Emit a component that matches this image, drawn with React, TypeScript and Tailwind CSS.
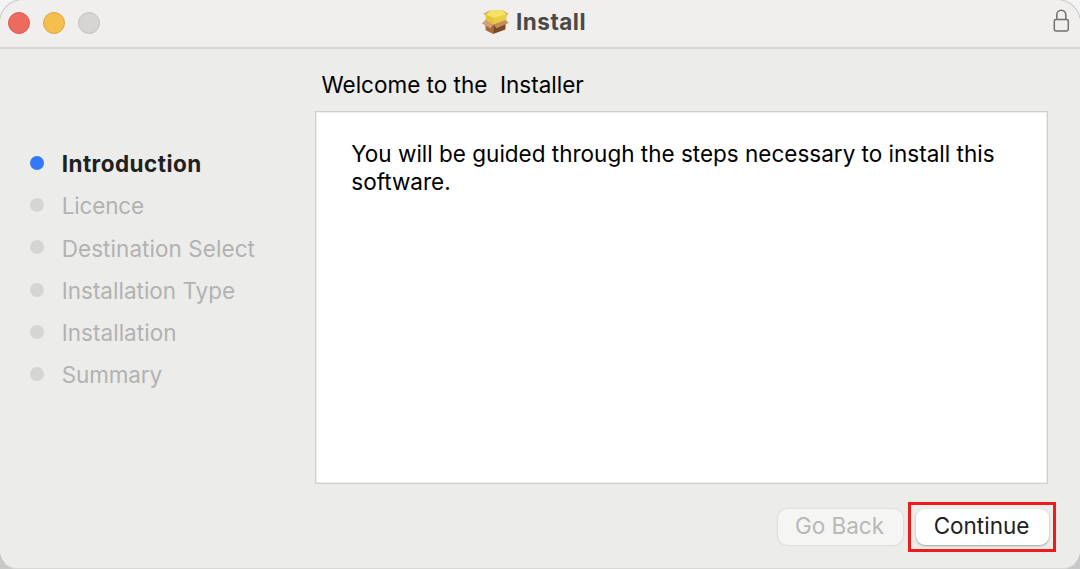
const steps = ['Introduction', 'Licence', 'Destination Select', 'Installation Type', 'Installation', 'Summary'];
const tracking = ['tracking-[0.45px]', 'tracking-[-0.15px]', 'tracking-[0.06px]', '', 'tracking-[0.03px]', 'tracking-[-0.15px]'];

function PackageIcon() {
  return (
    <svg viewBox="0 0 28 26" className="h-[26px] w-7 shrink-0">
      <path d="M4.2 12 12.2 16v9L4.6 21.2Z" fill="#a66d3c" />
      <path d="M12.2 15.5 24.8 12 24.4 20.4 12.2 25Z" fill="#7d4a22" />
      <path d="m2 4.6 6.5-3 1 2.2-5 3Z" fill="#dfb184" />
      <path d="m22 1.4 5.4 3.4-2.6 2.4-4-3Z" fill="#d5a16d" />
      <path d="m4.8 6 3.8-4.4L22 1.2l3.8 4.6-.6 5.6-13 4L4.6 11.6Z" fill="#e2c43a" />
      <path d="m5.4 5.8 3.6-4 12.8-.3 3.8 4.2L12.8 9Z" fill="#f3e266" />
      <path d="m12.8 9 12.4-3.2-.4 5.8-12.2 3.8Z" fill="#e8cf45" />
      <path d="m4.6 10.8 7.8 4.6-2.8 3.8L.8 14.6Z" fill="#d4a071" />
      <path d="M12.4 15.4 24.8 11l2.8 3-12 5.2Z" fill="#c58d5c" />
    </svg>
  );
}

function LockIcon() {
  return (
    <svg viewBox="0 0 18 24" className="h-6 w-[18px]" fill="none" stroke="#71706f" strokeWidth="1.5">
      <rect x="2.3" y="10.4" width="14" height="11.5" rx="1.6" />
      <path d="M4.8 10.2V5.8a4.5 4.6 0 0 1 9 0v4.4" />
    </svg>
  );
}

export default function App() {
  return (
    <div className="h-[569px] w-[1080px] overflow-hidden bg-linear-to-b from-[#f4f4f4] to-[#c8c8c8] font-['Inter',sans-serif] text-[22.5px]">
      <div className="-mx-px -mt-px flex h-[570px] flex-col overflow-hidden rounded-t-[24px] rounded-b-[18px] border border-[#c4c4c3] border-b-[#d8d8d7] bg-[#ececeb]">
        <header className="grid h-[49px] shrink-0 grid-cols-[1fr_auto_1fr] items-center border-b-2 border-[#d7d6d5] bg-[#f0efee] pr-[10px] pl-2">
          <div className="flex gap-[13px] pb-[1px]">
            <i className="size-[22px] rounded-full border border-[#d9594f] bg-[#ec6a5e]" />
            <i className="size-[22px] rounded-full border border-[#dba53c] bg-[#f4bf4f]" />
            <i className="size-[22px] rounded-full border border-[#c3c2c1] bg-[#d6d5d4]" />
          </div>
          <div className="mr-[11px] flex items-center gap-[7px] pb-[3px]">
            <PackageIcon />
            <h1 className="font-bold tracking-[0.5px] text-[#4a4947]">Install</h1>
          </div>
          <div className="flex justify-end pb-[5px]">
            <LockIcon />
          </div>
        </header>
        <div className="flex min-h-0 flex-1">
          <aside className="w-[315px] shrink-0 pt-[94px] pl-[29.7px]">
            <ul>
              {steps.map((step, i) => (
                <li key={step} className="flex h-[42.2px] items-center gap-[18px]">
                  <span className={`relative -top-px size-[14px] rounded-full ${i === 0 ? 'bg-[#3478f6]' : 'bg-[#d5d5d4]'}`} />
                  <span className={`${tracking[i]} ${i === 0 ? 'font-bold text-[#20211f]' : 'text-[#b2b2b1]'}`}>{step}</span>
                </li>
              ))}
            </ul>
          </aside>
          <main className="w-[733px]">
            <h2 className="flex h-[62px] items-center pt-[10px] pl-[6.5px] whitespace-pre text-black">Welcome to the  Installer</h2>
            <section className="h-[373px] border border-[#cfcfce] bg-white pt-[28px] pl-[35.3px] leading-[28px] text-black shadow-[inset_0_0_0_1px_#eeeeed]">
              You will be guided through the steps necessary to install this
              <br />
              software.
            </section>
            <div className="flex justify-end pt-[18px]">
              <button className="mt-[7px] mr-[5px] h-[36px] w-[125px] rounded-[9px] bg-[#f5f5f4] pr-[2px] pb-[2px] text-[#b8b8b7] shadow-[0_0_2px_#00000030]">Go Back</button>
              <div className="-mr-[8px] h-[50px] w-[148px] border-3 border-[#ed1c1c] pt-1 pl-[5px]">
                <button className="block h-[36px] w-[133px] rounded-[9px] bg-white pr-[2px] pb-[2px] text-[#20211f] shadow-[0_1px_2px_#00000050]">Continue</button>
              </div>
            </div>
          </main>
        </div>
      </div>
    </div>
  );
}
